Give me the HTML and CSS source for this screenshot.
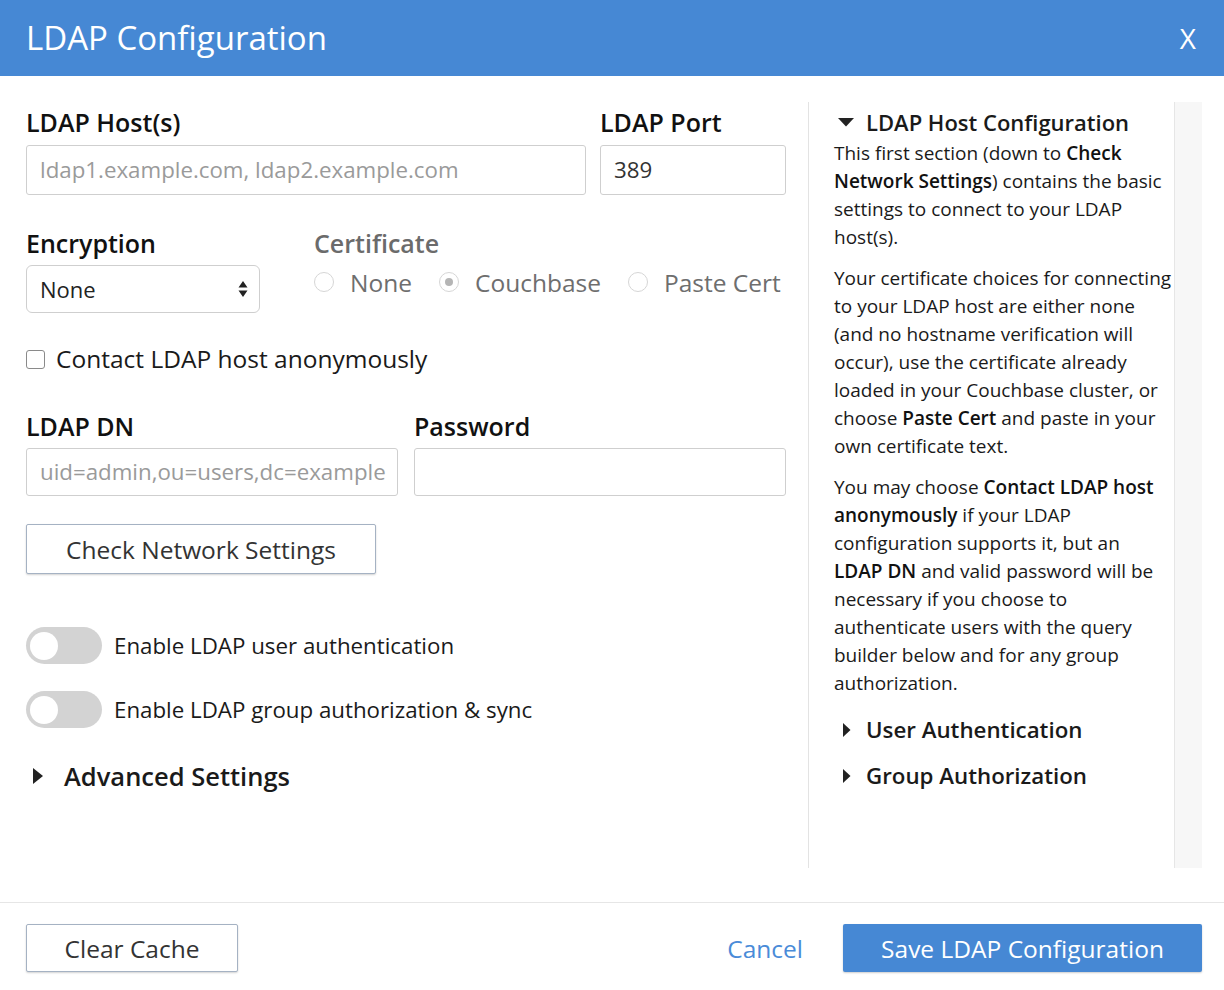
FILE: index.html
```html
<!DOCTYPE html>
<html>
<head>
<meta charset="utf-8">
<link rel="stylesheet" href="styles.css">
</head>
<body>
<div class="modal">
  <header class="modal-header">
    <h1 class="modal-title">LDAP Configuration</h1>
    <span class="close">X</span>
  </header>
  <div class="modal-body">
    <div class="form-col">
      <div class="row row-hosts">
        <div class="field field-hosts">
          <label class="label">LDAP Host(s)</label>
          <div class="input placeholder">ldap1.example.com, ldap2.example.com</div>
        </div>
        <div class="field field-port">
          <label class="label">LDAP Port</label>
          <div class="input">389</div>
        </div>
      </div>
      <div class="row row-enc">
        <div class="field field-enc">
          <label class="label">Encryption</label>
          <div class="select">
            <span>None</span>
            <svg class="select-arrows" width="10" height="18" viewBox="0 0 10 18"><path d="M5 1 L9.5 7.5 H0.5 Z M5 17 L9.5 10.5 H0.5 Z" fill="#222"/></svg>
          </div>
        </div>
        <div class="field field-cert">
          <label class="label label-muted">Certificate</label>
          <div class="radios">
            <span class="radio"><span class="radio-dot"></span>None</span>
            <span class="radio"><span class="radio-dot checked"></span>Couchbase</span>
            <span class="radio"><span class="radio-dot"></span>Paste Cert</span>
          </div>
        </div>
      </div>
      <div class="check-row">
        <span class="checkbox"></span>
        <span>Contact LDAP host anonymously</span>
      </div>
      <div class="row row-dn">
        <div class="field field-dn">
          <label class="label">LDAP DN</label>
          <div class="input input-sm placeholder">uid=admin,ou=users,dc=example</div>
        </div>
        <div class="field field-pw">
          <label class="label">Password</label>
          <div class="input input-sm"></div>
        </div>
      </div>
      <button class="btn btn-outline btn-check">Check Network Settings</button>
      <div class="toggle-row toggle-first">
        <span class="toggle"><span class="knob"></span></span>
        <span>Enable LDAP user authentication</span>
      </div>
      <div class="toggle-row">
        <span class="toggle"><span class="knob"></span></span>
        <span>Enable LDAP group authorization &amp; sync</span>
      </div>
      <div class="disclosure">
        <svg class="tri-right" width="12" height="16" viewBox="0 0 12 16"><path d="M1 0 L11 8 L1 16 Z" fill="#222"/></svg>
        <span>Advanced Settings</span>
      </div>
    </div>
    <aside class="help">
      <div class="help-content">
        <div class="help-heading">
          <svg class="tri-down" width="16" height="10" viewBox="0 0 16 10"><path d="M0 1 H16 L8 9.5 Z" fill="#222"/></svg>
          <span>LDAP Host Configuration</span>
        </div>
        <p>This first section (down to <b>Check Network Settings</b>) contains the basic settings to connect to your LDAP host(s).</p>
        <p>Your certificate choices for connecting to your LDAP host are either none (and no hostname verification will occur), use the certificate already loaded in your Couchbase cluster, or choose <b>Paste Cert</b> and paste in your own certificate text.</p>
        <p>You may choose <b>Contact LDAP host anonymously</b> if your LDAP configuration supports it, but an <b class="nb">LDAP DN</b> and valid password will be necessary if you choose to authenticate users with the query builder below and for any group authorization.</p>
        <div class="help-sub help-sub-first">
          <svg class="tri-sm" width="9" height="14" viewBox="0 0 9 14"><path d="M1 0 L8.5 7 L1 14 Z" fill="#222"/></svg>
          <span>User Authentication</span>
        </div>
        <div class="help-sub">
          <svg class="tri-sm" width="9" height="14" viewBox="0 0 9 14"><path d="M1 0 L8.5 7 L1 14 Z" fill="#222"/></svg>
          <span>Group Authorization</span>
        </div>
      </div>
      <div class="scroll-track"></div>
    </aside>
  </div>
  <footer class="modal-footer">
    <button class="btn btn-outline btn-clear">Clear Cache</button>
    <div class="footer-right">
      <a class="cancel">Cancel</a>
      <button class="btn btn-primary">Save LDAP Configuration</button>
    </div>
  </footer>
</div>
</body>
</html>
```
FILE: styles.css
```css
* { box-sizing: border-box; }
html, body { margin: 0; padding: 0; background: #fff; }
body {
  font-family: "Open Sans", "Noto Sans", sans-serif;
  color: #1a1a1a;
  width: 1224px;
  height: 990px;
  overflow: hidden;
}
.modal { width: 1224px; height: 990px; display: flex; flex-direction: column; }

.modal-header {
  height: 76px;
  flex-shrink: 0;
  background: #4688d4;
  display: flex;
  align-items: center;
  justify-content: space-between;
  padding: 0 26px 0 26px;
  color: #fff;
}
.modal-title { margin: 0; font-weight: 400; font-size: 33px; line-height: 40px; }
.close { font-size: 28px; line-height: 40px; margin-right: 2px; }

.modal-body {
  display: flex;
  flex-shrink: 0;
  padding: 26px 22px 0 26px;
  height: 827px;
  border-bottom: 1px solid #e6e6e6;
}
.form-col { width: 760px; flex-shrink: 0; margin-right: 22px; padding-top: 5px; }

.row { display: flex; }
.field { display: flex; flex-direction: column; flex-shrink: 0; }
.label {
  font-weight: 600;
  font-size: 25px;
  line-height: 30px;
  margin-bottom: 8px;
  color: #111;
  white-space: nowrap;
}
.label-muted { color: #6b6b6b; }
.input {
  height: 50px;
  border: 1px solid #cfcfcf;
  border-radius: 3px;
  padding: 0 13px;
  font-size: 22.3px;
  line-height: 48px;
  color: #333;
  white-space: nowrap;
  overflow: hidden;
}
.input-sm { height: 48px; line-height: 46px; }
.placeholder { color: #9a9a9a; }

.field-hosts { width: 560px; margin-right: 14px; }
.field-port { width: 186px; }

.row-enc { margin-top: 33px; }
.field-enc { width: 234px; margin-right: 54px; }
.field-enc .label { margin-bottom: 7px; }
.select {
  height: 48px;
  border: 1px solid #cfcfcf;
  border-radius: 6px;
  padding: 0 13px;
  display: flex;
  align-items: center;
  justify-content: space-between;
  font-size: 22px;
  color: #222;
}
.select-arrows { margin-right: -2px; }
.radios { display: flex; align-items: center; height: 36px; margin-top: -2px; white-space: nowrap; }
.radio {
  display: flex;
  align-items: center;
  font-size: 24.5px;
  color: #6e6e6e;
  margin-right: 27px;
  flex-shrink: 0;
}
.radio-dot {
  width: 20px; height: 20px;
  border: 1px solid #d6d6d6;
  border-radius: 50%;
  margin-right: 16px;
  position: relative;
  background: #fff;
  flex-shrink: 0;
}
.radio-dot.checked::after {
  content: "";
  position: absolute;
  left: 5px; top: 5px;
  width: 8px; height: 8px;
  border-radius: 50%;
  background: #b5b5b5;
}

.check-row {
  display: flex;
  align-items: center;
  font-size: 24.5px;
  line-height: 30px;
  margin-top: 31px;
}
.checkbox {
  width: 19px; height: 19px;
  border: 1px solid #8a8a8a;
  border-radius: 3px;
  margin-right: 11px;
}

.row-dn { margin-top: 37px; }
.field-dn { width: 372px; margin-right: 16px; }
.field-pw { width: 372px; }
.row-dn .label { margin-bottom: 7px; }

.btn {
  font-family: "Open Sans", "Noto Sans", sans-serif;
  font-size: 24.5px;
  cursor: pointer;
}
.btn-outline {
  background: #fff;
  border: 1px solid #a5b2c3;
  border-radius: 2px;
  color: #333;
  box-shadow: 0 1px 2px rgba(0,0,0,0.18);
}
.btn-check { display: block; width: 350px; height: 50px; margin-top: 28px; }

.toggle-row {
  display: flex;
  align-items: center;
  font-size: 22.3px;
  margin-top: 27px;
}
.toggle-first { margin-top: 53px; }
.toggle {
  width: 76px; height: 37px;
  border-radius: 19px;
  background: #d3d3d3;
  margin-right: 12px;
  display: flex;
  align-items: center;
  padding-left: 4px;
}
.knob { width: 28px; height: 28px; border-radius: 50%; background: #fff; }

.disclosure {
  display: flex;
  align-items: center;
  margin-top: 33px;
  font-size: 25.5px;
  font-weight: 600;
  line-height: 30px;
}
.tri-right { margin-left: 6px; margin-right: 20px; }

.help { display: flex; width: 394px; height: 766px; flex-shrink: 0; }
.help-content {
  width: 366px;
  border-left: 1px solid #e3e3e3;
  padding: 5px 0 0 25px;
  font-size: 19px;
  line-height: 28px;
  color: #1a1a1a;
}
.help-content b { font-weight: 600; color: #111; }
.help-content b.nb { white-space: nowrap; }
.help-content p { margin: 0 0 13px 0; }
.help-heading {
  display: flex;
  align-items: center;
  font-size: 22px;
  font-weight: 600;
  line-height: 30px;
  margin-bottom: 2px;
}
.tri-down { margin-left: 4px; margin-right: 12px; }
.help-sub {
  display: flex;
  align-items: center;
  font-size: 22.3px;
  font-weight: 600;
  line-height: 30px;
  margin-top: 16px;
}
.help-sub-first { margin-top: 18px; }
.tri-sm { margin-left: 8px; margin-right: 15px; }
.scroll-track {
  width: 28px;
  border-left: 1px solid #e6e6e6;
  background: #f7f7f7;
}

.modal-footer {
  display: flex;
  justify-content: space-between;
  align-items: flex-start;
  padding: 21px 22px 0 26px;
}
.btn-clear { width: 212px; height: 48px; }
.footer-right { display: flex; align-items: center; }
.cancel { color: #4a8bd8; font-size: 24.5px; margin-right: 40px; }
.btn-primary {
  width: 359px; height: 48px;
  background: #4688d4;
  color: #fff;
  border: none;
  border-radius: 2px;
  font-size: 24.5px;
  box-shadow: 0 1px 2px rgba(0,0,0,0.2);
}
```
